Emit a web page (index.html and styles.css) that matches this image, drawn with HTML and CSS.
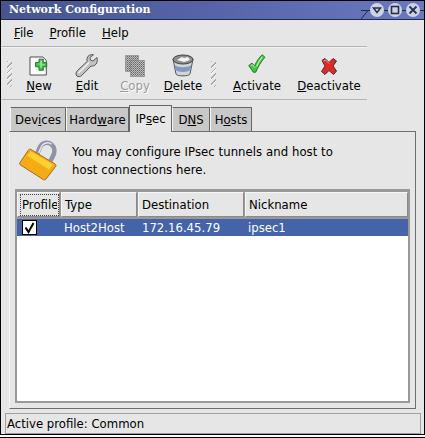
FILE: index.html
```html
<!DOCTYPE html>
<html lang="en">
<head>
    <meta charset="UTF-8">
    <meta name="viewport" content="width=device-width, initial-scale=1.0">
    <title>Network Configuration</title>
    <link rel="stylesheet" href="styles.css">
</head>
<body>
    <div class="window">
        <!-- Title bar -->
        <div class="titlebar">
            <span class="title">Network Configuration</span>
            <div class="title-buttons">
                <svg class="slope" width="7" height="18" viewBox="0 0 7 18"><path d="M0 18L7 9.500" stroke="#23284a" fill="none"/></svg>
                <svg width="18" height="16" viewBox="0 0 18 16"><circle cx="9" cy="8" r="7" fill="#cfd3e6"/><path d="M5.500 6h7L9 10.500z" fill="none" stroke="#2b2f4a" stroke-width="1.500"/></svg>
                <svg width="18" height="16" viewBox="0 0 18 16"><circle cx="9" cy="8" r="7" fill="#cfd3e6"/><rect x="5.500" y="4.500" width="7" height="7" fill="none" stroke="#2b2f4a" stroke-width="1.600"/></svg>
                <svg width="18" height="16" viewBox="0 0 18 16"><circle cx="9" cy="8" r="7" fill="#cfd3e6"/><path d="M5.500 4.500l7 7M12.500 4.500l-7 7" stroke="#2b2f4a" stroke-width="1.800"/></svg>
            </div>
        </div>

        <!-- Menu -->
        <div class="menubar">
            <span class="menu-item"><u>F</u>ile</span>
            <span class="menu-item"><u>P</u>rofile</span>
            <span class="menu-item"><u>H</u>elp</span>
        </div>

        <!-- Toolbar -->
        <div class="toolbar">
            <div class="handle"></div>
            <div class="tool tool-new">
                <svg width="24" height="24" viewBox="-2 -2 28 28"><path d="M1.500 1.500h15l4 4v17h-19z" fill="#fff" stroke="#333"/><path d="M12 4h5v4h4v5h-4v4h-5v-4H8V8h4z" fill="#3fc048" stroke="#1c6a24" stroke-linejoin="round"/><path d="M13.500 6h2v4h3.500v1h-3.500v3h-2v-4h-3V9h3z" fill="#9be89a"/></svg>
                <span><u>N</u>ew</span>
            </div>
            <div class="tool tool-edit">
                <svg width="24" height="24" viewBox="0 0 24 24"><path d="M22 3.500l-4 3.500-2.500-1 -.5-2.500L18.500.8c-2.800-.8-6 .8-6.500 3.500-.2 1.200 0 2.200.3 3L2.500 16.500c-2 2-1.800 4.500-.6 5.500 1.300 1.100 3.500.8 5-.7L16 12c3.500.8 7.500-2.500 6-8.500z" fill="#c2c2c2" stroke="#555"/><path d="M3.500 19L14 8.500" stroke="#f2f2f2" stroke-width="1.500"/></svg>
                <span><u>E</u>dit</span>
            </div>
            <div class="tool tool-copy disabled">
                <svg width="24" height="24" viewBox="0 0 24 24"><defs><pattern id="dots" width="2" height="2" patternUnits="userSpaceOnUse"><rect width="2" height="2" fill="#bbb"/><rect width="1" height="1" fill="#666"/><rect x="1" y="1" width="1" height="1" fill="#888"/></pattern></defs><path d="M2.500 1.500h13v16h-13z" fill="url(#dots)" stroke="#777" stroke-dasharray="1 1"/><path d="M7.500 6.500h14v16h-14z" fill="url(#dots)" stroke="#777" stroke-dasharray="1 1"/></svg>
                <span><u>C</u>opy</span>
            </div>
            <div class="tool tool-delete">
                <svg width="24" height="24" viewBox="0 0 24 24"><path d="M2 5l3 15c.5 2.500 13.500 2.500 14 0l3-15z" fill="#d4d4d4" stroke="#555"/><path d="M3.500 11c4 3 13 3 17 0l-1 5c-3 2.500-12 2.500-15 0z" fill="#7d9ac2"/><ellipse cx="12" cy="5.500" rx="10" ry="4.500" fill="#8d8d8d" stroke="#444"/><path d="M6 6l5-3 2 1 4-1 2 3-6 2z" fill="#f4f4f4"/></svg>
                <span><u>D</u>elete</span>
            </div>
            <div class="handle handle-two"></div>
            <div class="tool tool-activate">
                <svg width="24" height="24" viewBox="-3 0 29 29"><path d="M1.500 14l4-3 3 3.500C11 9 14 4 18 .8l3 3.200C16.500 9 13 15 10 22H7z" fill="#3fc83f" stroke="#1d5c1d" stroke-linejoin="round"/><path d="M4 14l2-1 3 3.500" fill="none" stroke="#b6f2b0" stroke-width="1.200"/><path d="M11 15C13 10 15 7 18 3.500" fill="none" stroke="#b6f2b0" stroke-width="1.500"/></svg>
                <span><u>A</u>ctivate</span>
            </div>
            <div class="tool tool-deactivate">
                <svg width="24" height="24" viewBox="0 -2 24 24"><path d="M5 4.500l3-2 4 4 4-4 3.500 2.500-3.500 5 3.500 5-3 3.500-4.500-4-4 4-3.500-3 3.500-5.500z" fill="#d92c2c" stroke="#6f1a1a" stroke-linejoin="round"/><path d="M6.500 5l2-1 3.500 3.500" fill="none" stroke="#f49a9a"/></svg>
                <span><u>D</u>eactivate</span>
            </div>
        </div>

        <!-- Tabs -->
        <div class="tabs">
            <div class="tab tab-devices">Dev<u>i</u>ces</div>
            <div class="tab tab-hardware">Hard<u>w</u>are</div>
            <div class="tab tab-ipsec active">IP<u>s</u>ec</div>
            <div class="tab tab-dns">D<u>N</u>S</div>
            <div class="tab tab-hosts">H<u>o</u>sts</div>
        </div>

        <div class="tab-pane">
            <div class="info">
                <svg class="lock" width="40" height="42" viewBox="0 0 40 42"><path d="M19 14l3-7c2-4.500 8-5.500 11.500-2.500 3.500 2.800 3.500 7.500 1.500 11.500l-2.500 5" fill="none" stroke="#8f93a8" stroke-width="4.500"/><path d="M20.500 13l3-6.500c2-4 7-4.800 10-2.300" fill="none" stroke="#e4e6f0" stroke-width="1.500"/><path d="M13 9.500l24 14.500c1 .6 1.200 1.500.7 2.400L28 39c-.6 1-1.600 1.200-2.600.6L2.500 25c-1-.6-1.200-1.600-.5-2.500L10.500 10c.6-.9 1.500-1.100 2.500-.5z" fill="#f4ab16" stroke="#a36a1c"/><path d="M13 11.500l22 13-4 5-22-14z" fill="#ffd02e"/></svg>
                <p class="info-text">You may configure IPsec tunnels and host to<br>host connections here.</p>
            </div>

            <div class="list">
                <div class="list-head">
                    <div class="col col-profile"><span class="focus"><span class="clip">Profile</span></span></div>
                    <div class="col col-type">Type</div>
                    <div class="col col-dest">Destination</div>
                    <div class="col col-nick">Nickname</div>
                </div>
                <div class="list-row">
                    <div class="cell cell-profile"><span class="check"><svg width="13" height="13" viewBox="0 0 13 13"><path d="M2.500 6.500l3 4.500 5-9" fill="none" stroke="#000" stroke-width="2"/></svg></span></div>
                    <div class="cell cell-type">Host2Host</div>
                    <div class="cell cell-dest">172.16.45.79</div>
                    <div class="cell cell-nick">ipsec1</div>
                </div>
            </div>
        </div>

        <div class="statusbar">Active profile: Common</div>
    </div>
    <div class="frame-edge"></div>
</body>
</html>
```

FILE: styles.css
```css
body {
    margin: 0;
    background-color: #fff;
    font-family: "DejaVu Sans", sans-serif;
    font-size: 11.7px;
    color: #000;
    overflow: hidden;
}

.window {
    width: 423px;
    height: 434px;
    border-left: 1px solid #000;
    border-right: 1px solid #000;
    border-bottom: 1px solid #000;
    background-color: #e6e6e6;
    display: flex;
    flex-direction: column;
}

.frame-edge {
    height: 1px;
    margin-top: 2px;
    background-color: #000;
}

/* Title bar */
.titlebar {
    height: 18px;
    flex: none;
    border-top: 1px solid #000;
    border-bottom: 1px solid #23284a;
    background: linear-gradient(to right, #46558f, #5a68ac 60%, #6a78c0);
    display: flex;
    align-items: center;
    justify-content: space-between;
    padding-left: 8px;
}

.title {
    font-family: "DejaVu Serif", serif;
    font-weight: bold;
    font-size: 11px;
    color: #fff;
    padding-bottom: 2px;
}

.title-buttons {
    display: flex;
    align-items: center;
    height: 18px;
    padding-right: 2px;
    background: linear-gradient(#23284a, #23284a) center / 100% 1px no-repeat;
}

/* Menu */
.menubar {
    height: 26px;
    flex: none;
    display: flex;
    align-items: center;
    padding-left: 13px;
    gap: 16px;
}

/* Toolbar */
.toolbar {
    width: 366px;
    height: 54px;
    flex: none;
    box-sizing: border-box;
    border-top: 1px solid #b4b4b4;
    border-bottom: 1px solid #b4b4b4;
    box-shadow: inset 0 1px 0 #f2f2f2;
    display: flex;
    align-items: flex-start;
    padding-left: 6px;
}

.handle {
    width: 5px;
    height: 26px;
    margin-top: 14px;
    background: repeating-linear-gradient(135deg, #a8a8a8 0 1px, #f4f4f4 1px 2px, #e6e6e6 2px 4px);
}

.handle-two {
    margin-left: 4px;
}

.tool {
    display: flex;
    flex-direction: column;
    align-items: center;
    padding-top: 7px;
    gap: 1px;
}

.tool span {
    line-height: 15px;
    white-space: nowrap;
}

.tool-new { margin-left: 7px; width: 40px; }
.tool-edit { margin-left: 8px; width: 40px; }
.tool-copy { margin-left: 8px; width: 40px; }
.tool-delete { margin-left: 4px; width: 48px; }
.tool-activate { margin-left: 14px; width: 54px; }
.tool-deactivate { margin-left: 12px; width: 66px; }

.disabled span {
    color: #9a9a9a;
    text-shadow: 1px 1px 0 #fff;
}

/* Tabs */
.tabs {
    display: flex;
    align-items: flex-end;
    flex: none;
    height: 24px;
    margin-top: 7px;
    padding-left: 9px;
}

.tab {
    height: 24px;
    box-sizing: border-box;
    border: 1px solid #666;
    border-bottom: none;
    border-left-color: #f4f4f4;
    background-color: #c8c8c8;
    display: flex;
    align-items: center;
    justify-content: center;
    white-space: nowrap;
}

.tab.active {
    height: 27px;
    background-color: #e6e6e6;
    margin-bottom: -1px;
    position: relative;
    border-left-color: #666;
}

.tab-devices { width: 56px; }
.tab-hardware { width: 63px; }
.tab-ipsec { width: 43px; }
.tab-dns { width: 38px; }
.tab-hosts { width: 42px; }

.tab-pane {
    flex: 1;
    min-height: 0;
    margin: 0 8px 4px 8px;
    box-sizing: border-box;
    border: 1px solid #6e6e6e;
    border-left-color: #f4f4f4;
    padding: 0 5px 5px 5px;
    display: flex;
    flex-direction: column;
}

.info {
    height: 57px;
    flex: none;
    display: flex;
    align-items: flex-start;
}

.lock {
    margin: 8px 0 0 3px;
}

.info-text {
    margin: 11px 0 0 14px;
    line-height: 18px;
    letter-spacing: 0.05px;
}

/* List */
.list {
    flex: 1;
    background-color: #fff;
    border: 3px solid #999;
    border-left-width: 2px;
    border-right-width: 2px;
    border-bottom-width: 2px;
}

.list-head {
    display: flex;
    height: 27px;
    box-sizing: border-box;
    background-color: #999;
    gap: 1px;
    padding-bottom: 2px;
}

.col {
    box-sizing: border-box;
    background-color: #e6e6e6;
    border-top: 1px solid #f6f6f6;
    border-left: 1px solid #f6f6f6;
    border-right: 1px solid #8a8a8a;
    border-bottom: 1px solid #8a8a8a;
    display: flex;
    align-items: center;
    padding-left: 3px;
    overflow: hidden;
    white-space: nowrap;
}

.col-profile { width: 43px; padding-left: 2px; }
.col-type { width: 76px; }
.col-dest { width: 106px; }
.col-nick { flex: 1; }

.focus {
    display: block;
    width: 37px;
    border: 1px dotted #444;
    line-height: 20px;
}

.clip {
    display: block;
    width: 35px;
    margin-left: 1px;
    overflow: hidden;
}

.list-row {
    display: flex;
    height: 17px;
    align-items: center;
    background-color: #4463a9;
    color: #fff;
}

.cell-profile { width: 47px; }
.cell-type { width: 78px; }
.cell-dest { width: 106px; }

.check {
    display: block;
    width: 13px;
    height: 13px;
    margin-left: 5px;
    background-color: #fff;
    border: 1px solid #000;
}

.check svg {
    display: block;
}

/* Status bar */
.statusbar {
    height: 21px;
    flex: none;
    box-sizing: border-box;
    margin: 0 3px 0 4px;
    border: 1px solid #a0a0a0;
    display: flex;
    align-items: center;
    padding-left: 1px;
}
```
